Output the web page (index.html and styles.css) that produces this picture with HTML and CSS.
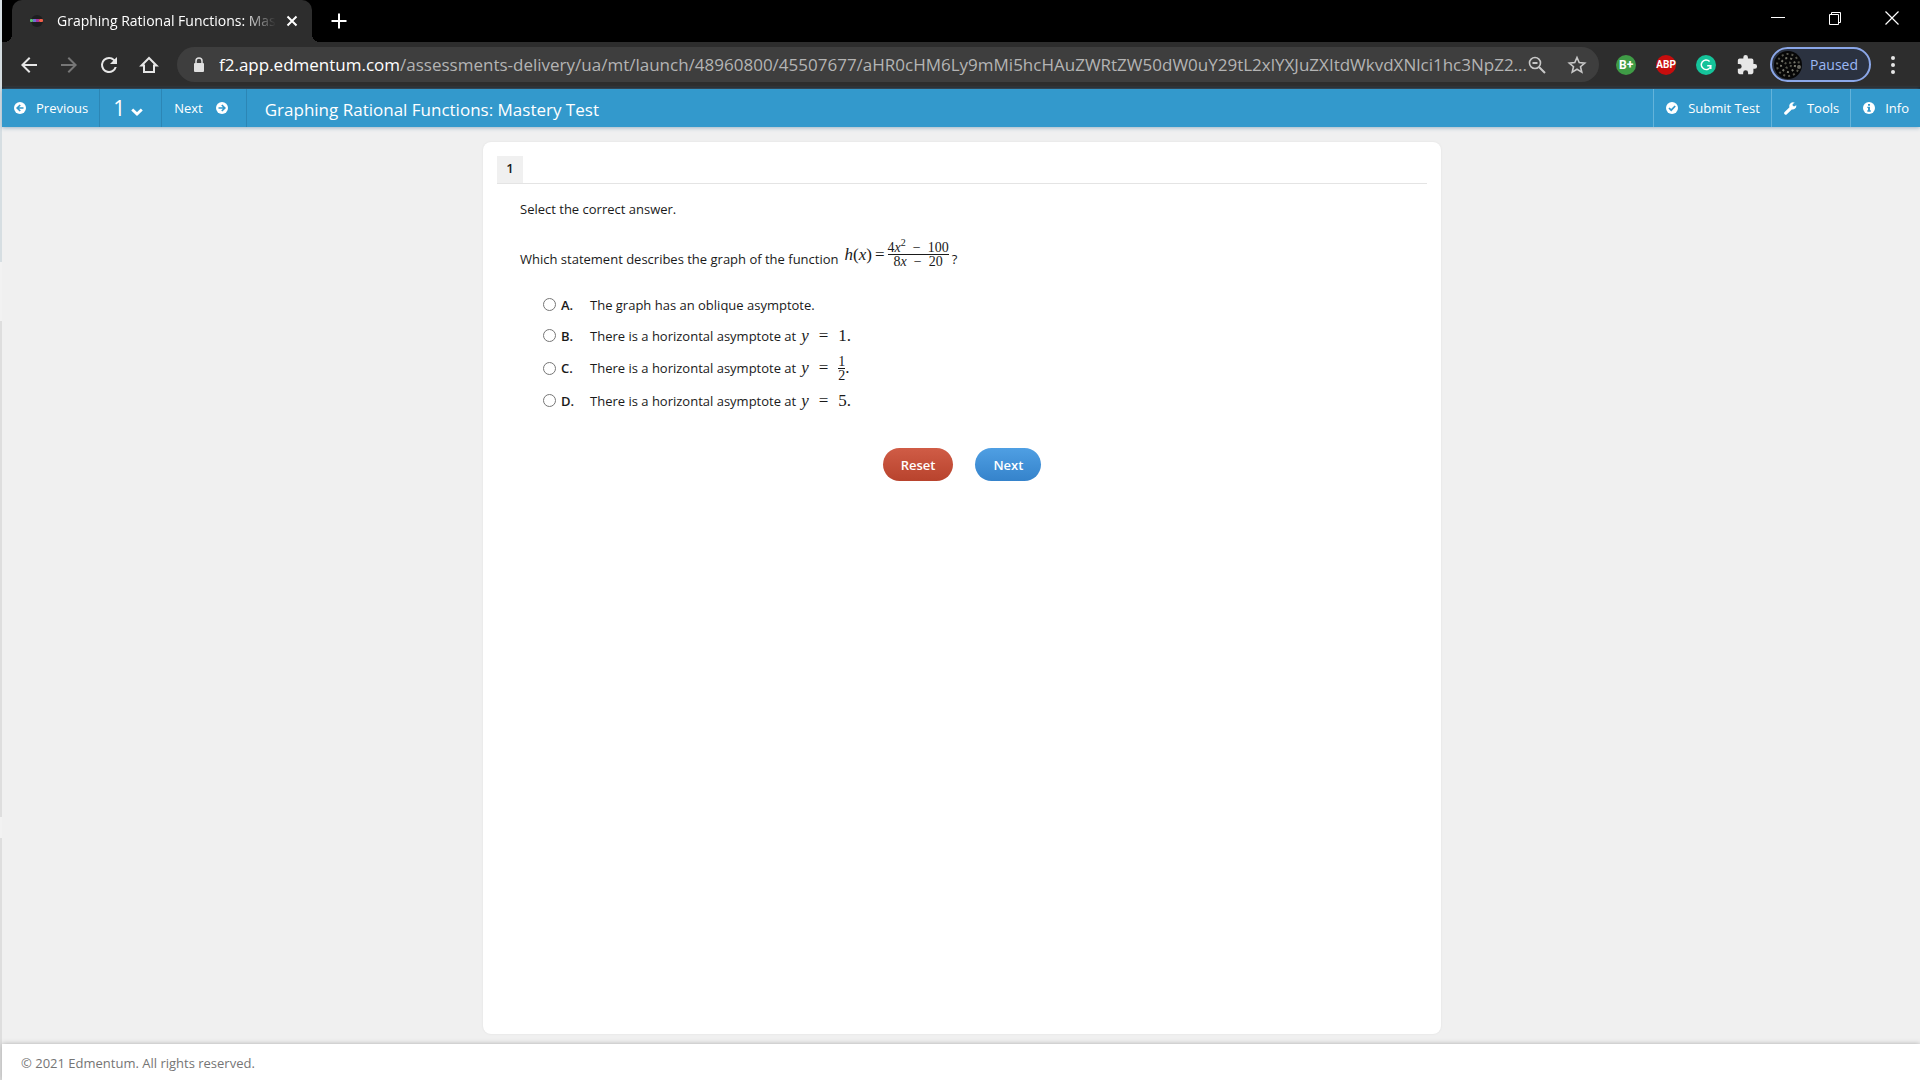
FILE: index.html
```html
<!DOCTYPE html>
<html lang="en">
<head>
  <meta charset="UTF-8">
  <meta name="viewport" content="width=device-width, initial-scale=1.0">
  <title>Graphing Rational Functions: Mastery Test</title>
  <link rel="stylesheet" href="styles.css">
</head>
<body>
  <!-- Browser window -->
  <div class="tab-strip">
    <div class="tab">
      <svg class="favicon" viewBox="0 0 18 18" width="18" height="18">
        <circle cx="9" cy="9" r="6" fill="#1d1d1f"/>
        <rect x="2" y="7" width="3" height="3" rx="1" fill="#58c470"/>
        <rect x="5" y="7" width="3" height="3" fill="#6d6fd0"/>
        <rect x="8" y="7" width="3" height="3" fill="#a8329a"/>
        <rect x="11" y="7" width="4" height="3" rx="1" fill="#f0604a"/>
      </svg>
      <span class="tab-title">Graphing Rational Functions: Mastery Test</span>
      <button class="tab-close" aria-label="Close tab">
        <svg viewBox="0 0 12 12" width="12" height="12"><path d="M1.5 1.5l9 9M10.5 1.5l-9 9" stroke="#fff" stroke-width="2" fill="none"/></svg>
      </button>
    </div>
    <button class="new-tab" aria-label="New tab">
      <svg viewBox="0 0 16 16" width="16" height="16"><path d="M8 0.500v15M0.500 8h15" stroke="#fff" stroke-width="2" fill="none"/></svg>
    </button>
    <div class="window-controls">
      <button aria-label="Minimize"><svg viewBox="0 0 14 14" width="14" height="14"><path d="M0 6.500h14" stroke="#fff" fill="none"/></svg></button>
      <button aria-label="Restore"><svg viewBox="0 0 14 14" width="14" height="14"><path d="M1.500 3.500h9v10h-9zM3.500 3.500v-2h9v10h-2" stroke="#fff" fill="none"/></svg></button>
      <button aria-label="Close"><svg viewBox="0 0 14 14" width="14" height="14"><path d="M0.500 0.500l13 13M13.500 0.500l-13 13" stroke="#fff" stroke-width="1.200" fill="none"/></svg></button>
    </div>
  </div>

  <div class="toolbar">
    <div class="nav-buttons">
      <button aria-label="Back"><svg viewBox="0 0 24 24" width="24" height="24"><path d="M20 11H7.830l5.590-5.590L12 4l-8 8 8 8 1.410-1.410L7.830 13H20v-2z" fill="#e6e6e6"/></svg></button>
      <button aria-label="Forward"><svg viewBox="0 0 24 24" width="24" height="24"><path d="M12 4l-1.410 1.410L16.170 11H4v2h12.170l-5.580 5.590L12 20l8-8z" fill="#767676"/></svg></button>
      <button aria-label="Reload"><svg viewBox="0 0 24 24" width="24" height="24"><path d="M17.650 6.350A7.960 7.960 0 0 0 12 4a8 8 0 1 0 7.730 10h-2.080A6 6 0 1 1 12 6c1.660 0 3.140.690 4.220 1.780L13 11h7V4l-2.350 2.350z" fill="#e6e6e6"/></svg></button>
      <button aria-label="Home"><svg viewBox="0 0 24 24" width="24" height="24"><path d="M12 5L4.500 12.500H7V19h10v-6.500h2.500z" stroke="#e6e6e6" stroke-width="2" fill="none"/></svg></button>
    </div>
    <div class="address">
      <svg viewBox="0 0 12 16" width="12" height="16"><path d="M3 7V4a3 3 0 0 1 6 0v3" stroke="#e0e0e0" stroke-width="1.500" fill="none"/><rect x="1" y="6" width="10" height="9" rx="1" fill="#e0e0e0"/></svg>
      <a class="url" href="#"><span class="url-host">f2.app.edmentum.com</span>/assessments-delivery/ua/mt/launch/48960800/45507677/aHR0cHM6Ly9mMi5hcHAuZWRtZW50dW0uY29tL2xlYXJuZXItdWkvdXNlci1hc3NpZ2...</a>
      <div class="address-actions">
        <svg viewBox="0 0 18 18" width="18" height="18"><path d="M11 11l6 6M4.500 7h5" stroke="#c8c8c8" stroke-width="2" fill="none"/><circle cx="7" cy="7" r="5.500" stroke="#c8c8c8" stroke-width="1.600" fill="none"/></svg>
        <svg viewBox="0 0 20 20" width="20" height="20"><path d="M10 2.500l2.200 5.100 5.500.500-4.200 3.600 1.300 5.400L10 14.200l-4.800 2.900 1.300-5.400-4.200-3.600 5.500-.500z" stroke="#c8c8c8" stroke-width="1.600" fill="none"/></svg>
      </div>
    </div>
    <div class="extensions">
      <span class="ext ext-b">B+</span>
      <span class="ext ext-abp">ABP</span>
      <span class="ext ext-g"><svg viewBox="0 0 20 20" width="20" height="20"><path d="M14.500 5.600A6 6 0 1 0 16 11h-4.500M16 11v4" stroke="#fff" stroke-width="1.800" fill="none"/></svg></span>
      <svg class="puzzle" viewBox="0 0 24 24" width="22" height="22"><path d="M20.500 11H19V7a2 2 0 0 0-2-2h-4V3.500a2.500 2.500 0 0 0-5 0V5H4a2 2 0 0 0-2 2v3.800h1.500a2.700 2.700 0 0 1 0 5.400H2V20a2 2 0 0 0 2 2h3.800v-1.500a2.700 2.700 0 0 1 5.400 0V22H17a2 2 0 0 0 2-2v-4h1.500a2.500 2.500 0 0 0 0-5z" fill="#e6e6e6"/></svg>
    </div>
    <button class="profile">
      <svg viewBox="0 0 28 28" width="28" height="28">
        <circle cx="14" cy="14" r="14" fill="#070707"/>
        <g fill="none" stroke-dasharray="2 3">
          <circle cx="14" cy="14" r="11" stroke="#55554c" stroke-width="2"/>
          <circle cx="14" cy="14" r="7" stroke="#77776c" stroke-width="2"/>
          <circle cx="14" cy="14" r="3" stroke="#55554c" stroke-width="2"/>
        </g>
        <circle cx="25" cy="16" r="2" fill="#66665e"/>
      </svg>
      <span>Paused</span>
    </button>
    <button class="menu" aria-label="Menu"><svg viewBox="0 0 6 20" width="6" height="20"><g fill="#e6e6e6"><circle cx="3" cy="3" r="2"/><circle cx="3" cy="10" r="2"/><circle cx="3" cy="17" r="2"/></g></svg></button>
  </div>

  <!-- Test navigation -->
  <header class="test-bar">
    <button class="bar-item previous">
      <svg viewBox="0 0 12 12" width="12" height="12"><circle cx="6" cy="6" r="6" fill="#fff"/><path d="M9.500 6H3.500M6.200 3L3.200 6l3 3" stroke="#39c" stroke-width="1.700" fill="none"/></svg>
      Previous
    </button>
    <button class="bar-item question-picker">
      <span>1</span>
      <svg viewBox="0 0 12 8" width="12" height="8"><path d="M1.200 1.500L6 6l4.800-4.500" stroke="#fff" stroke-width="2.800" fill="none"/></svg>
    </button>
    <button class="bar-item next">
      Next
      <svg viewBox="0 0 12 12" width="12" height="12"><circle cx="6" cy="6" r="6" fill="#fff"/><path d="M2.500 6h6M5.800 3l3 3-3 3" stroke="#39c" stroke-width="1.700" fill="none"/></svg>
    </button>
    <h1>Graphing Rational Functions: Mastery Test</h1>
    <div class="bar-right">
      <button class="bar-item">
        <svg viewBox="0 0 12 12" width="12" height="12"><circle cx="6" cy="6" r="6" fill="#fff"/><path d="M3 6l2.200 2.200L9.200 4" stroke="#39c" stroke-width="1.700" fill="none"/></svg>
        Submit Test
      </button>
      <button class="bar-item">
        <svg viewBox="0 0 14 14" width="13" height="13"><path d="M13.200 3.500l-2.400 1.300-1.500-.900V2.200L11.600.800A4 4 0 0 0 5.900 5.600L.700 10.800a1.600 1.600 0 0 0 2.400 2.400l5.300-5.200a4 4 0 0 0 4.800-4.500z" fill="#fff"/></svg>
        Tools
      </button>
      <button class="bar-item">
        <svg viewBox="0 0 12 12" width="12" height="12"><circle cx="6" cy="6" r="6" fill="#fff"/><path d="M5 2h2v1.700H5zM4.300 4.700H7v3.600h.800V9.800H4.300V8.300H5V6.100h-.700z" fill="#39c"/></svg>
        Info
      </button>
    </div>
  </header>

  <main>
    <form class="card">
      <div class="card-header">
        <span class="question-number">1</span>
      </div>
      <div class="question">
        <p>Select the correct answer.</p>
        <p class="prompt">
          Which statement describes the graph of the function
          <span class="formula">
            <span><i>h</i>(<i>x</i>)</span>
            <span>=</span>
            <span class="fraction">
              <span>4<i>x</i><sup>2</sup> &nbsp;−&nbsp; 100</span>
              <span>8<i>x</i> &nbsp;−&nbsp; 20</span>
            </span>
          </span>
          ?
        </p>
        <div class="answers">
          <div class="answer">
            <input type="radio" name="answer" id="a">
            <label for="a"><b>A.</b> The graph has an oblique asymptote.</label>
          </div>
          <div class="answer">
            <input type="radio" name="answer" id="b">
            <label for="b"><b>B.</b> There is a horizontal asymptote at <span class="math"><i>y</i><span>=</span><span>1.</span></span></label>
          </div>
          <div class="answer answer-tall">
            <input type="radio" name="answer" id="c">
            <label for="c"><b>C.</b> There is a horizontal asymptote at <span class="math"><i>y</i><span>=</span><span class="half"><span class="fraction"><span>1</span><span>2</span></span>.</span></span></label>
          </div>
          <div class="answer">
            <input type="radio" name="answer" id="d">
            <label for="d"><b>D.</b> There is a horizontal asymptote at <span class="math"><i>y</i><span>=</span><span>5.</span></span></label>
          </div>
        </div>
      </div>
      <div class="actions">
        <button type="reset" class="btn btn-reset">Reset</button>
        <button type="button" class="btn btn-next">Next</button>
      </div>
    </form>
  </main>

  <footer>© 2021 Edmentum. All rights reserved.</footer>
</body>
</html>
```

FILE: styles.css
```css
* {
  margin: 0;
  padding: 0;
  box-sizing: border-box;
}

body {
  display: flex;
  flex-direction: column;
  min-height: 100vh;
  padding-left: 2px;
  background: linear-gradient(#d6dee2 0 262px, #f2f2f2 262px 321px, #dedede 321px 817px, #f2f2f2 817px 838px, #dedede 838px);
  color: #1a1a1a;
  font-family: "Open Sans", "Noto Sans", sans-serif;
  font-size: 13px;
  line-height: 18px;
}

button {
  border: 0;
  background: none;
  color: inherit;
  font: inherit;
  cursor: pointer;
}

svg {
  display: block;
  flex: none;
}

/* Browser window */
.tab-strip {
  display: flex;
  align-items: center;
  height: 42px;
  background: #000;
  color: #fff;
}

.tab {
  position: relative;
  display: flex;
  align-items: center;
  width: 300px;
  height: 42px;
  margin-left: 10px;
  padding: 0 14px 0 16px;
  border-radius: 10px 10px 0 0;
  background: #2d2d2d;
}

.tab::before,
.tab::after {
  content: "";
  position: absolute;
  bottom: 0;
  width: 8px;
  height: 8px;
}

.tab::before {
  right: 100%;
  background: radial-gradient(circle at 0 0, transparent 8px, #2d2d2d 8px);
}

.tab::after {
  left: 100%;
  background: radial-gradient(circle at 100% 0, transparent 8px, #2d2d2d 8px);
}

.tab-title {
  flex: 1;
  overflow: hidden;
  margin-left: 11px;
  white-space: nowrap;
  font-size: 14px;
  -webkit-mask-image: linear-gradient(90deg, #000 85%, transparent);
  mask-image: linear-gradient(90deg, #000 85%, transparent);
}

.tab-close {
  margin-left: 10px;
}

.new-tab {
  margin-left: 19px;
}

.window-controls {
  display: flex;
  gap: 43px;
  margin-left: auto;
  padding: 0 21px 6px 0;
}

.toolbar {
  display: flex;
  align-items: center;
  height: 47px;
  padding: 0 24px 0 15px;
  border-bottom: 2px solid #16222c;
  background: #2d2d2d;
}

.nav-buttons {
  display: flex;
  gap: 16px;
}

.address {
  display: flex;
  flex: 1;
  align-items: center;
  min-width: 0;
  height: 35px;
  margin-left: 16px;
  padding: 0 12px 0 16px;
  border-radius: 18px;
  background: #3e3e3e;
}

.url {
  flex: 1;
  overflow: hidden;
  margin-left: 14px;
  color: #b4b4b4;
  font-size: 17px;
  line-height: 24px;
  text-decoration: none;
  white-space: nowrap;
}

.url-host {
  color: #fff;
}

.address-actions {
  display: flex;
  align-items: center;
  gap: 21px;
}

.extensions {
  display: flex;
  align-items: center;
  gap: 20px;
  margin-left: 17px;
}

.ext {
  display: flex;
  align-items: center;
  justify-content: center;
  width: 20px;
  height: 20px;
  border-radius: 50%;
  color: #fff;
  font-family: Roboto, sans-serif;
  font-size: 10px;
  font-weight: 700;
}

.ext-b {
  background: #3f9c46;
  font-size: 12px;
}

.ext-abp {
  background: #c70d0d;
}

.ext-g {
  background: #15c39a;
}

.ext-g svg {
  width: 16px;
}

.profile {
  display: flex;
  align-items: center;
  gap: 8px;
  height: 35px;
  margin-left: 12px;
  padding: 0 11px 0 2px;
  border: 2px solid #8ba7e8;
  border-radius: 18px;
  background: #2b3240;
  color: #9bb8f5;
  font-size: 14px;
}

.menu {
  margin-left: 19px;
}

/* Test navigation */
.test-bar {
  position: relative;
  display: flex;
  height: 38px;
  background: #39c;
  box-shadow: 0 1px 4px #9ab4c6;
  color: #fff;
}

.bar-item {
  display: flex;
  align-items: center;
  gap: 10px;
  padding: 0 11px 0 12px;
  border-right: 1px solid #2c86b5;
}

.question-picker {
  gap: 6px;
  padding: 0 18px 0 13px;
}

.question-picker span {
  font-size: 21px;
  line-height: 24px;
}

.question-picker svg {
  margin-top: 7px;
}

.next {
  gap: 13px;
  padding: 0 18px 0 12px;
}

.test-bar h1 {
  margin-left: 18px;
  font-size: 17px;
  font-weight: 400;
  line-height: 42px;
}

.bar-right {
  display: flex;
  margin-left: auto;
}

.bar-right .bar-item {
  border-right: 0;
  border-left: 1px solid #63b3da;
}

main {
  display: flex;
  flex: 1;
  justify-content: center;
  padding: 15px 20px 10px 22px;
  background: #f0f0f0;
}

.card {
  width: 100%;
  max-width: 958px;
  padding: 14px;
  border-radius: 8px;
  background: #fff;
  box-shadow: 0 0 2px #ddd;
}

.card-header {
  display: flex;
  border-bottom: 1px solid #e4e4e4;
}

.question-number {
  width: 26px;
  padding-bottom: 2px;
  background: #f0f0f0;
  font-weight: 600;
  line-height: 25px;
  text-align: center;
}

.question {
  padding: 16px 23px 0;
}

.prompt {
  display: flex;
  align-items: flex-end;
  height: 40px;
  margin-top: 10px;
}

.formula {
  display: flex;
  align-items: center;
  gap: 3px;
  margin: 0 3px 0 6px;
  font-family: "Liberation Serif", serif;
  font-size: 17px;
}

.fraction {
  display: inline-flex;
  flex-direction: column;
  align-items: center;
  font-size: 14px;
  line-height: 13px;
}

.fraction > span:first-child {
  border-bottom: 1px solid #1a1a1a;
}

sup {
  font-size: 10px;
  line-height: 0;
}

.answers {
  margin: 21px 0 0 23px;
}

.answer {
  display: flex;
  align-items: center;
  height: 31px;
}

.answer-tall {
  height: 34px;
}

.answer input {
  width: 13px;
  height: 13px;
}

.answer label {
  display: flex;
  align-items: center;
  margin-left: 5px;
}

.answer b {
  width: 29px;
  font-weight: 600;
}

.math {
  display: flex;
  align-items: center;
  gap: 10px;
  margin-left: 5px;
  font-family: "Liberation Serif", serif;
  font-size: 17px;
}

.half {
  display: flex;
  align-items: center;
}

.actions {
  display: flex;
  justify-content: center;
  gap: 22px;
  margin-top: 32px;
}

.btn {
  height: 33px;
  padding: 0 18px;
  border-radius: 17px;
  color: #fff;
  font-weight: 600;
}

.btn-reset {
  background: linear-gradient(#d05c46, #b8432d);
}

.btn-next {
  background: linear-gradient(#4f9fe3, #3583cb);
}

footer {
  position: relative;
  padding: 10px 19px 8px;
  background: #fff;
  box-shadow: 0 0 5px #aaa;
  color: #757575;
}
```
